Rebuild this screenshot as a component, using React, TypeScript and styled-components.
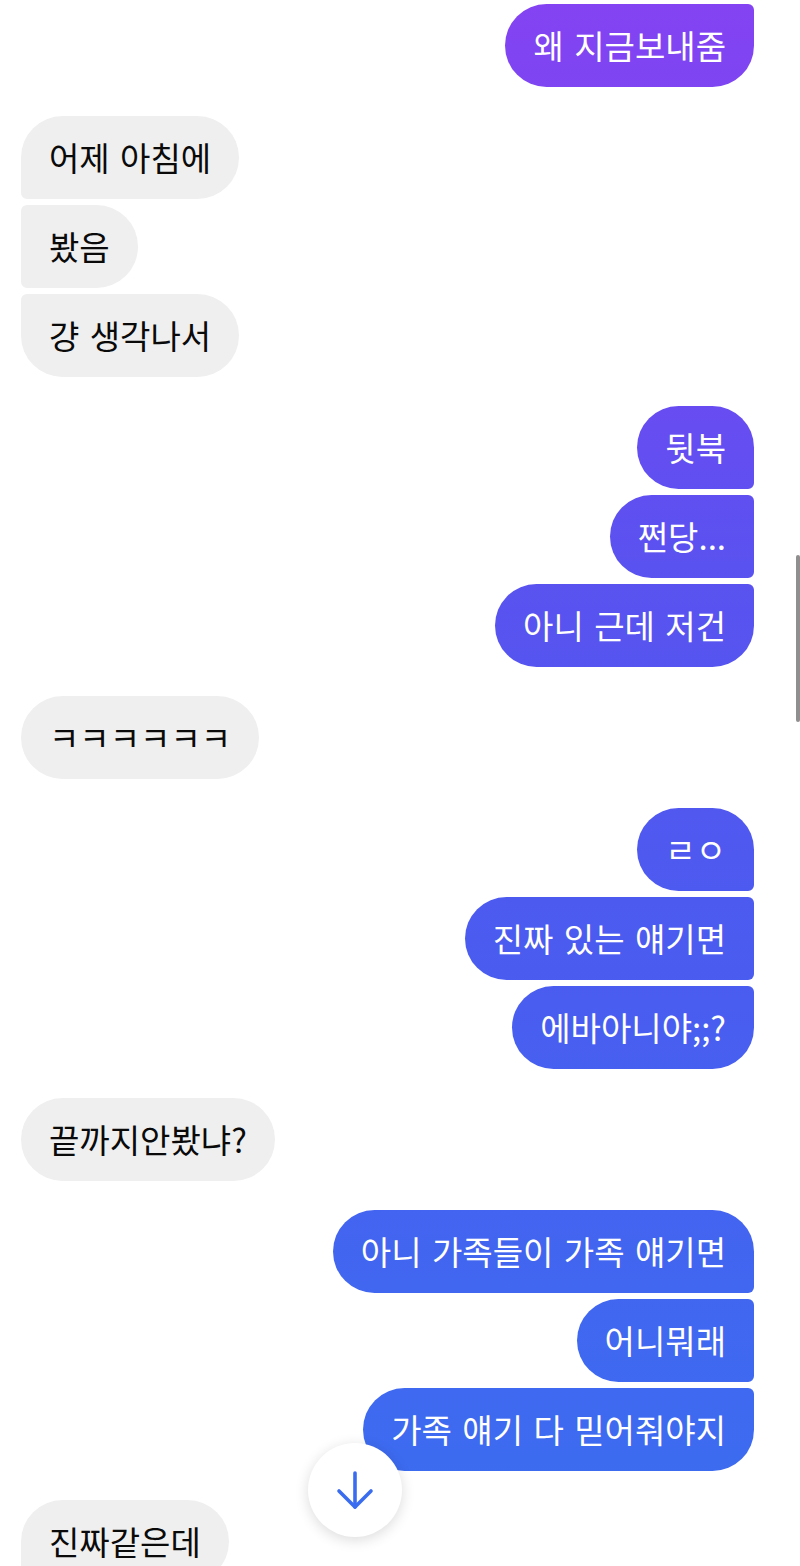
import styled, { createGlobalStyle } from "styled-components";

type Side = "me" | "them";
type Pos = "single" | "first" | "middle" | "last";

interface group {
    side: Side,
    msgs: string[],
    cont?: boolean,  // group started above the screen
    more?: boolean   // group goes on below the screen
}

const GROUPS: group[] = [
    { side: "me", msgs: ["왜 지금보내줌"], cont: true },
    { side: "them", msgs: ["어제 아침에", "봤음", "걍 생각나서"] },
    { side: "me", msgs: ["뒷북", "쩐당...", "아니 근데 저건"] },
    { side: "them", msgs: ["ㅋㅋㅋㅋㅋㅋ"] },
    { side: "me", msgs: ["ㄹㅇ", "진짜 있는 얘기면", "에바아니야;;?"] },
    { side: "them", msgs: ["끝까지안봤냐?"] },
    { side: "me", msgs: ["아니 가족들이 가족 얘기면", "어니뭐래", "가족 얘기 다 믿어줘야지"] },
    { side: "them", msgs: ["진짜같은데"], more: true },
];

const posOf = (i: number, g: group): Pos => {
    const first = i === 0 && !g.cont;
    const last = i === g.msgs.length - 1 && !g.more;
    if (first && last) return "single";
    if (first) return "first";
    if (last) return "last";
    return "middle";
}

const App = () => {
    const LIST = GROUPS.map((g, gi) => <Group key={gi} $side={g.side}>
        {g.msgs.map((m, i) => <Bubble key={i} $side={g.side} $pos={posOf(i, g)}>{m}</Bubble>)}
    </Group>);
    return (
        <>
            <GlobalStyle />
            <Screen>
                <MessageList>
                    {LIST}
                </MessageList>
                <ScrollDown>
                    <svg width="40" height="40" viewBox="0 0 40 40" fill="none" stroke="#3a6cf0" strokeWidth="3.6" strokeLinecap="round" strokeLinejoin="round">
                        <path d="M20 3v34" />
                        <path d="M4 21l16 16 16-16" />
                    </svg>
                </ScrollDown>
                <ScrollThumb />
            </Screen>
        </>
    )
}

const GlobalStyle = createGlobalStyle`
html, body {
    margin: 0;
    padding: 0;
    background: #ffffff;
}
body {
    font-family: "Noto Sans CJK KR", "Noto Sans", sans-serif;
}
`

const Screen = styled.div`
position: relative;
width: 800px;
height: 1566px;
overflow: hidden;
background-color: #ffffff;
`

const MessageList = styled.div`
display: flex;
flex-direction: column;
row-gap: 29px;
padding: 4px 46px 0 21px;
`

const Group = styled.div<{ $side: Side }>`
display: flex;
flex-direction: column;
row-gap: 6px;
align-items: ${({ $side }) => $side === "me" ? "flex-end" : "flex-start"};
`

const BIG = 42;
const SMALL = 6;

const radius = (side: Side, pos: Pos) => {
    const top = pos === "single" || pos === "first" ? BIG : SMALL;
    const bottom = pos === "single" || pos === "last" ? BIG : SMALL;
    // tl tr br bl
    return side === "me"
        ? `${BIG}px ${top}px ${bottom}px ${BIG}px`
        : `${top}px ${BIG}px ${BIG}px ${bottom}px`;
}

const Bubble = styled.div<{ $side: Side, $pos: Pos }>`
box-sizing: border-box;
height: 83px;
padding: 20px 28px;
font-size: 33px;
line-height: 43px;
word-spacing: 3px;
white-space: nowrap;
border-radius: ${({ $side, $pos }) => radius($side, $pos)};
color: ${({ $side }) => $side === "me" ? "#ffffff" : "#0a0a0a"};
background: ${({ $side }) => $side === "me"
        ? "linear-gradient(180deg, #8443f2 0%, #6d4af2 22%, #5a52f0 36%, #4b5bf0 60%, #4463f0 75%, #3a6ef0 100%) fixed"
        : "#efefef"};
`

const ScrollDown = styled.div`
position: absolute;
left: 308px;
bottom: 29px;
width: 94px;
height: 94px;
border-radius: 50%;
background-color: #ffffff;
box-shadow: 0 3px 14px rgba(0, 0, 0, 0.14);
display: flex;
align-items: center;
justify-content: center;
`

const ScrollThumb = styled.div`
position: absolute;
top: 555px;
right: 0;
width: 4px;
height: 167px;
border-radius: 2px;
background-color: #8f8f8f;
`

export default App;
